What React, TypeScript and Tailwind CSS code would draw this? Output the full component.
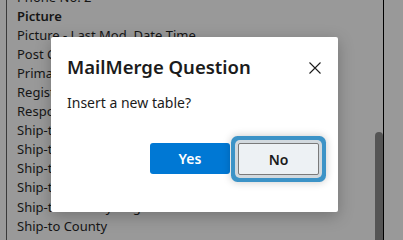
import React from "react";

const rows: { t: string; b?: boolean }[] = [
  { t: "Phone No. 2" },
  { t: "Picture", b: true },
  { t: "Picture - Last Mod. Date Time" },
  { t: "Post Code" },
  { t: "Primary Contact No." },
  { t: "Registration No." },
  { t: "Responsibility Center" },
  { t: "Ship-to Address" },
  { t: "Ship-to Address 2" },
  { t: "Ship-to City" },
  { t: "Ship-to Code" },
  { t: "Ship-to Country/Region" },
  { t: "Ship-to County" },
  { t: "Ship-to Name" },
];

export default function App() {
  return (
    <div
      className="relative flex w-[403px] h-[240px] overflow-hidden bg-[#999999]"
      style={{ fontFamily: '"Noto Sans", "Open Sans", sans-serif' }}
    >
      <div className="w-[6px] shrink-0" />
      <div className="w-px shrink-0 bg-[#3a3a3a]" />
      <div className="flex-1 pl-[10px] mt-[-12.5px] flex flex-col">
        {rows.map((r) => (
          <div
            key={r.t}
            className={`h-[19.1px] shrink-0 flex items-center text-[13px] leading-none whitespace-nowrap text-[#151515] ${
              r.b ? "font-semibold" : ""
            }`}
          >
            {r.t}
          </div>
        ))}
      </div>
      <div className="w-[8px] shrink-0 pt-[132px] flex flex-col">
        <div className="flex-1 rounded-t-full bg-[#555555]" />
      </div>
      <div className="w-px shrink-0 bg-black" />
      <div className="w-[19px] shrink-0" />

      {/* Dialog */}
      <div className="absolute left-[51px] top-[37px] w-[287px] h-[175px] bg-white rounded-[2px] shadow-[0_4px_16px_rgba(0,0,0,0.25)] flex flex-col">
        <div className="flex items-start justify-between pl-[16px] pr-[17px] pt-[17px]">
          <div className="text-[18.5px] leading-[26px] font-semibold text-[#1b1b1b]">
            MailMerge Question
          </div>
          <svg width="12" height="12" viewBox="0 0 12 12" className="mt-[8px]">
            <path d="M0.5 0.5 L11.5 11.5 M11.5 0.5 L0.5 11.5" stroke="#1b1b1b" strokeWidth="1.1" fill="none" />
          </svg>
        </div>
        <div className="pl-[16px] mt-[13px] text-[14px] leading-[20px] text-[#1b1b1b]">
          Insert a new table?
        </div>
        <div className="flex justify-end gap-[8px] pr-[19px] mt-[30px]">
          <button className="w-[80px] h-[31px] rounded-[3px] bg-[#0078d4] text-white text-[14px] font-semibold">
            Yes
          </button>
          <button className="w-[81px] h-[32px] rounded-[2px] border border-[#7a7a7a] bg-[#edf1f4] text-[#1b1b1b] text-[14px] font-semibold shadow-[0_0_0_3px_#d2d9de,0_0_0_7px_#3c93c7,0_0_8px_7px_rgba(0,0,0,0.22)]">
            No
          </button>
        </div>
      </div>
    </div>
  );
}
